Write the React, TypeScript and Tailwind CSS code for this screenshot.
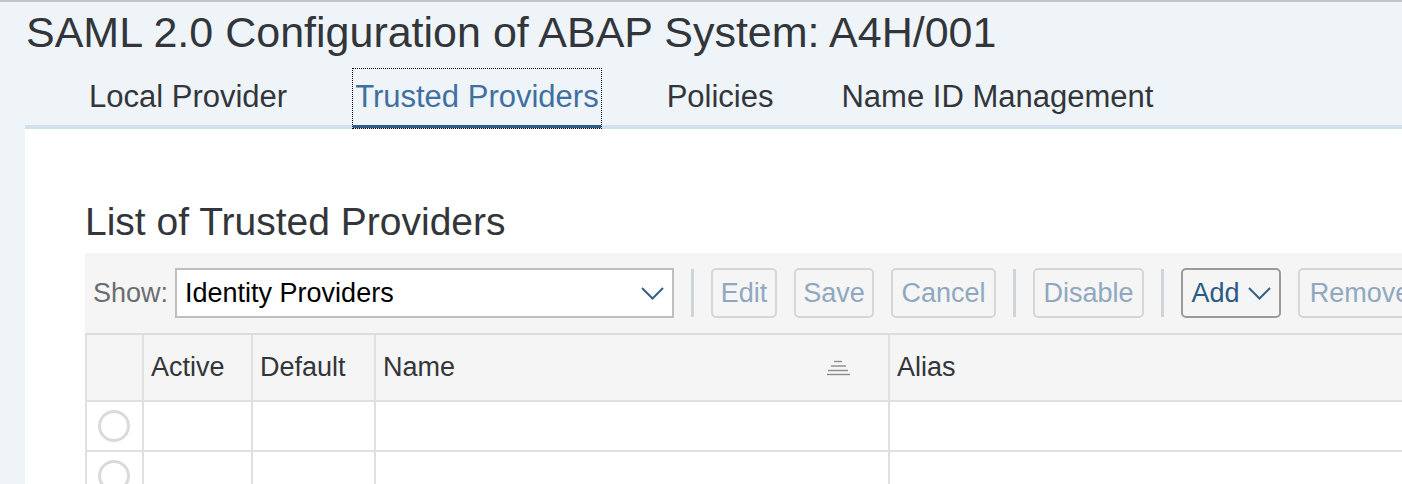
import { type ReactNode } from "react";

const tabs = ["Local Provider", "Trusted Providers", "Policies", "Name ID Management"];

export default function App() {
  return (
    <div className="h-[484px] w-full overflow-hidden border-t-2 border-[#c4c4c4] bg-[#eff4f9] font-['Liberation_Sans',Arial,sans-serif] text-[#32363a]">
      <div className="flex h-full flex-col pl-[25px]">
        <h1 className="mt-[9px] ml-[1px] text-[43px] leading-[43px] whitespace-nowrap">
          SAML 2.0 Configuration of ABAP System: A4H/001
        </h1>

        <div className="mt-[15px] flex h-[60px] items-start gap-[64px] border-b-4 border-[#d1e0ee] pl-[62px]">
          {tabs.map((t, i) =>
            i === 1 ? (
              <div
                key={t}
                className="h-[59px] border-b-[3px] border-[#2f5c86] px-[2px] pt-[12px] text-[31px] leading-[31px] whitespace-nowrap text-[#3f70a0] outline-1 outline-dotted outline-black"
              >
                {t}
              </div>
            ) : (
              <div key={t} className="h-[56px] px-[2px] pt-[12px] text-[31px] leading-[31px] whitespace-nowrap">
                {t}
              </div>
            ),
          )}
        </div>

        <div className="flex-1 bg-white pl-[60px] pt-[73px]">
          <h2 className="text-[39px] leading-[39px] whitespace-nowrap">List of Trusted Providers</h2>

          <div className="mt-[12px] w-[1500px]">
            <div className="flex h-[80px] items-center gap-[17px] bg-[#f5f5f5] pl-[8px] text-[27px]">
              <div className="flex items-center gap-[7px]">
                <span className="text-[#6a6d70]">Show:</span>
                <div className="flex h-[50px] w-[499px] items-center justify-between border-2 border-[#bfbfbf] bg-white pr-[8px] pl-[8px] text-black">
                  <span>Identity Providers</span>
                  <Chevron />
                </div>
              </div>
              <Sep />
              <Btn w="w-[66px]">Edit</Btn>
              <Btn w="w-[80px]">Save</Btn>
              <Btn w="w-[105px]">Cancel</Btn>
              <Sep />
              <Btn w="w-[111px]">Disable</Btn>
              <Sep />
              <div className="flex h-[50px] w-[100px] items-center justify-center gap-[8px] rounded-[5px] border-2 border-[#9b9b9b] text-[#2b5a85]">
                <span>Add</span>
                <Chevron />
              </div>
              <Btn w="w-[124px]">Remove</Btn>
            </div>

            <div className="grid grid-cols-[57px_109px_123px_514px_1fr] border-t-2 border-[#dcdcdc] text-[27px]">
              <HeadCell />
              <HeadCell>Active</HeadCell>
              <HeadCell>Default</HeadCell>
              <HeadCell>
                <span>Name</span>
                <SortIcon />
              </HeadCell>
              <HeadCell>Alias</HeadCell>

              {[0, 1].map((r) => (
                <Row key={r} />
              ))}
            </div>
          </div>
        </div>
      </div>
    </div>
  );
}

function Row() {
  return (
    <>
      <div className="flex h-[50px] items-center justify-center border-b-2 border-l-2 border-[#e0e0e0] pr-[2px]">
        <div className="h-[32px] w-[32px] rounded-full border-[3px] border-[#dadada]" />
      </div>
      <div className="h-[50px] border-b-2 border-l-2 border-[#e0e0e0]" />
      <div className="h-[50px] border-b-2 border-l-2 border-[#e0e0e0]" />
      <div className="h-[50px] border-b-2 border-l-2 border-[#e0e0e0]" />
      <div className="h-[50px] border-b-2 border-l-2 border-[#e0e0e0]" />
    </>
  );
}

function HeadCell({ children }: { children?: ReactNode }) {
  return (
    <div className="flex h-[67px] items-center justify-between border-b-2 border-l-2 border-[#e0e0e0] bg-[#f5f5f5] pr-[37px] pl-[7px] whitespace-nowrap">
      {children}
    </div>
  );
}

function Btn({ w, children }: { w: string; children: ReactNode }) {
  return (
    <div
      className={`flex h-[50px] shrink-0 items-center justify-center rounded-[5px] border-2 border-[#d6d6d6] text-[#8fa8c0] ${w}`}
    >
      {children}
    </div>
  );
}

function Sep() {
  return <div className="h-[48px] w-[3px] shrink-0 bg-[#cfd4d9]" />;
}

function Chevron() {
  return (
    <svg width="23" height="13" viewBox="0 0 23 13" fill="none" stroke="#346187" strokeWidth="2">
      <polyline points="1,1 11.5,11.5 22,1" />
    </svg>
  );
}

function SortIcon() {
  return (
    <svg width="24" height="16" viewBox="0 0 24 16" stroke="#8c8c8c" strokeWidth="1.4">
      <line x1="7" y1="1.5" x2="15" y2="1.5" />
      <line x1="4" y1="6" x2="19" y2="6" />
      <line x1="1" y1="10.5" x2="21" y2="10.5" />
      <line x1="0" y1="14.5" x2="23" y2="14.5" />
    </svg>
  );
}
